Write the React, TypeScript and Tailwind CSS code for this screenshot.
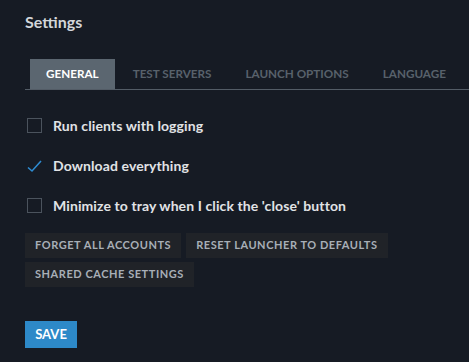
const tabs = ["GENERAL", "TEST SERVERS", "LAUNCH OPTIONS", "LANGUAGE"];

function Checkbox({ checked }: { checked: boolean }) {
  if (checked) {
    return (
      <svg className="w-[15px] h-[15px]" viewBox="0 0 15 15" fill="none">
        <path
          d="M1 9.5l4 3.5 9-10"
          stroke="#2e8bd0"
          strokeWidth={1.6}
        />
      </svg>
    );
  }
  return <div className="w-[15px] h-[15px] border border-[#4b535d]" />;
}

function Option({ label, checked }: { label: string; checked?: boolean }) {
  return (
    <div className="flex items-center gap-[11px] h-[15px]">
      <Checkbox checked={!!checked} />
      <span className="text-[14px] font-bold text-[#e1e3e6] tracking-[0.1px]">
        {label}
      </span>
    </div>
  );
}

function GreyButton({ children }: { children: React.ReactNode }) {
  return (
    <button className="h-[25px] px-[10px] bg-[#202328] text-[11px] font-bold text-[#a8afb7] tracking-[0.55px] whitespace-nowrap">
      {children}
    </button>
  );
}

export default function App() {
  return (
    <div
      className="w-[469px] h-[362px] bg-[#161b24] pl-[25px] pt-[12px] overflow-hidden"
      style={{ fontFamily: "Lato, 'Open Sans', sans-serif" }}
    >
      <h1 className="text-[16px] font-bold text-[#d3d6da] leading-[20px]">
        Settings
      </h1>

      {/* Tabs */}
      <div className="mt-[27px] flex gap-[2px] pl-[5px] border-b border-[#535c66]">
        {tabs.map((t, i) => (
          <div
            key={t}
            className={
              i === 0
                ? "h-[30px] px-[16px] shrink-0 whitespace-nowrap flex items-center bg-[#5b6670] text-white text-[11.7px] font-bold"
                : "h-[30px] px-[16px] shrink-0 whitespace-nowrap flex items-center text-[#58616b] text-[11.7px] font-bold"
            }
          >
            {t}
          </div>
        ))}
      </div>

      <div className="mt-[28px] pl-[2px] flex flex-col gap-[25px]">
        <Option label="Run clients with logging" />
        <Option label="Download everything" checked />
        <Option label="Minimize to tray when I click the 'close' button" />
      </div>

      <div className="mt-[20px] flex flex-col gap-[4px] items-start">
        <div className="flex gap-[5px]">
          <GreyButton>FORGET ALL ACCOUNTS</GreyButton>
          <GreyButton>RESET LAUNCHER TO DEFAULTS</GreyButton>
        </div>
        <GreyButton>SHARED CACHE SETTINGS</GreyButton>
      </div>

      <button className="mt-[34px] h-[27px] w-[52px] bg-[#2d89c8] text-white text-[13px] font-bold">
        SAVE
      </button>
    </div>
  );
}
